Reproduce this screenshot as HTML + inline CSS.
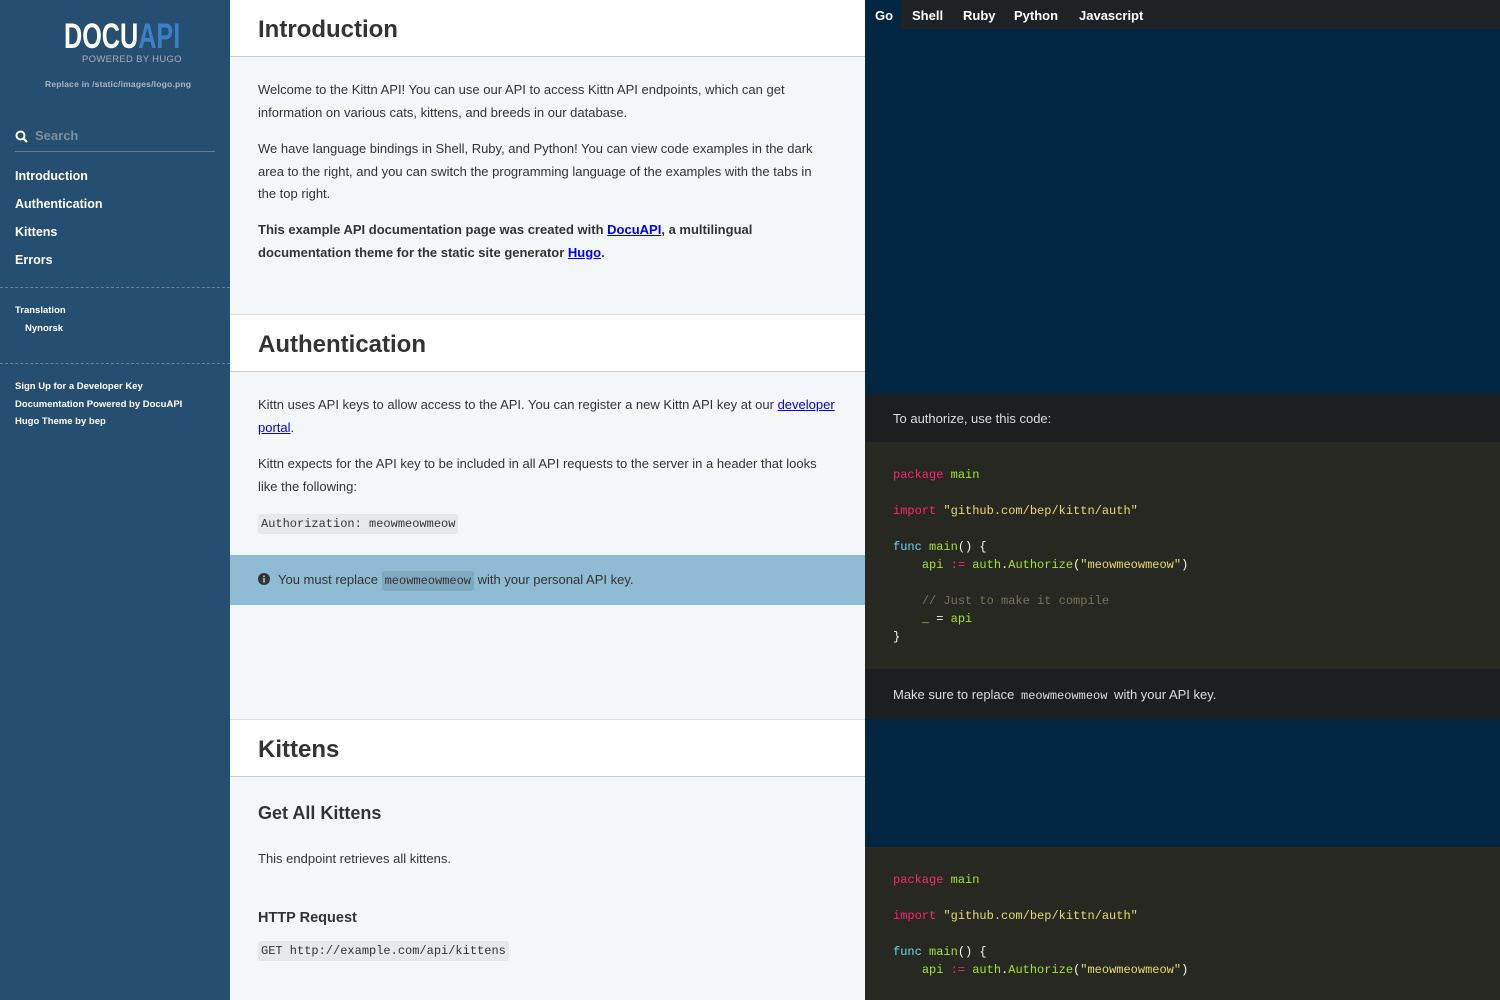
<!DOCTYPE html>
<html><head><meta charset="utf-8"><style>
*{margin:0;padding:0;box-sizing:border-box}
body{width:1500px;height:1000px;overflow:hidden;font-family:"Liberation Sans",sans-serif;font-size:13px;color:#333;background:#f3f7f9;position:relative}
.side{position:absolute;left:0;top:0;width:230px;height:1000px;background:#264e70;color:#fff}
.logo{position:absolute;left:64px;top:17px;font-family:"Liberation Sans Narrow","Liberation Sans",sans-serif;font-weight:bold;font-size:35px;letter-spacing:0;transform:scaleX(.72);transform-origin:left;white-space:nowrap}
.logo span{color:#3b7fc4}
.pw{position:absolute;left:82px;top:54px;font-size:9.5px;color:#aab;letter-spacing:.3px}
.rep{position:absolute;left:45px;top:79px;font-size:8.5px;font-weight:bold;color:#aab7c4;letter-spacing:.2px}
.srch{position:absolute;left:15px;top:128px;width:200px;height:24px;border-bottom:1px solid #6b7f92;color:#7f8c99;font-weight:bold;font-size:13px;padding-left:20px}
.srch svg{position:absolute;left:0;top:2px}
.nav{position:absolute;left:15px;font-weight:bold;font-size:12.5px}
.dash{position:absolute;left:0;width:230px;border-top:1px dashed #6b8099}
.sm{position:absolute;left:15px;font-weight:bold;font-size:9.5px}
.main{position:absolute;left:230px;top:0;width:635px;height:1000px}
.hd{position:absolute;left:0;width:635px;height:58px;background:#fff;border-bottom:1px solid #ccc;border-top:1px solid #ddd;font-weight:bold;font-size:24px;color:#333;padding:16px 28px 0}
.p{position:absolute;left:28px;width:575px;line-height:22.5px;font-size:13px}
a{color:#0000ee;text-decoration:underline}
code{font-family:"Liberation Mono",monospace;font-size:12px;background:#e5e9ec;padding:3px 3px;border-radius:3px}
.note{position:absolute;left:0;top:555px;width:635px;height:50px;background:#8fbbd4;padding:17px 28px;font-size:13px}
.note code{background:#80a9c0}
.right{position:absolute;left:865px;top:0;width:635px;height:1000px;background:#022541}
.tabs{position:absolute;top:0;left:0;width:635px;height:29px;background:#1f2225;color:#fff;font-weight:bold;font-size:13px}
.tabs span{position:absolute;top:8px}
.call{position:absolute;left:0;width:635px;background:#1c1e20;color:#ddd;font-size:13px;padding-left:28px}
.call code{background:none;color:#ddd}
.code{position:absolute;left:0;width:635px;background:#272822;color:#f8f8f2;font-family:"Liberation Mono",monospace;font-size:12px;line-height:18px;padding-left:28px;white-space:pre}
.k{color:#f92672}.g{color:#a6e22e}.s{color:#e6db74}.b{color:#66d9ef}.c{color:#75715e}
</style></head><body>
<div class="side">
<div class="logo">DOCU<span>API</span></div>
<div class="pw">POWERED BY HUGO</div>
<div class="rep">Replace in /static/images/logo.png</div>
<div class="srch"><svg width="13" height="13" viewBox="0 0 13 13"><circle cx="5.5" cy="5.5" r="4" stroke="#fff" stroke-width="2" fill="none"/><line x1="8.5" y1="8.5" x2="12" y2="12" stroke="#fff" stroke-width="2.2"/></svg>Search</div>
<div class="nav" style="top:169px">Introduction</div>
<div class="nav" style="top:197px">Authentication</div>
<div class="nav" style="top:225px">Kittens</div>
<div class="nav" style="top:253px">Errors</div>
<div class="dash" style="top:287px"></div>
<div class="sm" style="top:305px">Translation</div>
<div class="sm" style="top:323px;left:25px">Nynorsk</div>
<div class="dash" style="top:363px"></div>
<div class="sm" style="top:381px">Sign Up for a Developer Key</div>
<div class="sm" style="top:399px">Documentation Powered by DocuAPI</div>
<div class="sm" style="top:416px">Hugo Theme by bep</div>
</div>
<div class="main">
<div class="hd" style="top:-1px">Introduction</div>
<div class="p" style="top:79px">Welcome to the Kittn API! You can use our API to access Kittn API endpoints, which can get information on various cats, kittens, and breeds in our database.</div>
<div class="p" style="top:138px">We have language bindings in Shell, Ruby, and Python! You can view code examples in the dark area to the right, and you can switch the programming language of the examples with the tabs in the top right.</div>
<div class="p" style="top:219px;font-weight:bold">This example API documentation page was created with <a href="#">DocuAPI</a>, a multilingual documentation theme for the static site generator <a href="#">Hugo</a>.</div>
<div class="hd" style="top:314px">Authentication</div>
<div class="p" style="top:394px;width:590px">Kittn uses API keys to allow access to the API. You can register a new Kittn API key at our <a href="#">developer portal</a>.</div>
<div class="p" style="top:453px">Kittn expects for the API key to be included in all API requests to the server in a header that looks like the following:</div>
<div class="p" style="top:512px"><code>Authorization: meowmeowmeow</code></div>
<div class="note"><svg width="12" height="12" viewBox="0 0 12 12" style="vertical-align:-1px;margin-right:8px"><circle cx="6" cy="6" r="6" fill="#333"/><rect x="5.1" y="5" width="1.8" height="4.5" fill="#8fbbd4"/><circle cx="6" cy="3.2" r="1" fill="#8fbbd4"/></svg>You must replace <code>meowmeowmeow</code> with your personal API key.</div>
<div class="hd" style="top:719px">Kittens</div>
<div class="p" style="top:802px;font-weight:bold;font-size:18px">Get All Kittens</div>
<div class="p" style="top:848px">This endpoint retrieves all kittens.</div>
<div class="p" style="top:907px;font-weight:bold;font-size:14.5px">HTTP Request</div>
<div class="p" style="top:939px"><code>GET http://example.com/api/kittens</code></div>
</div>
<div class="right">
<div class="tabs"><span style="left:0;top:0;width:36px;height:29px;background:#022541;padding:8px 10px">Go</span><span style="left:47px">Shell</span><span style="left:98px">Ruby</span><span style="left:149px">Python</span><span style="left:214px">Javascript</span></div>
<div class="call" style="top:394px;height:48px;line-height:49px">To authorize, use this code:</div>
<div class="code" style="top:442px;height:227px;padding-top:24px"><span class="k">package</span> <span class="g">main</span>

<span class="k">import</span> <span class="s">"github.com/bep/kittn/auth"</span>

<span class="b">func</span> <span class="g">main</span>() {
    <span class="g">api</span> <span class="k">:=</span> <span class="g">auth</span>.<span class="g">Authorize</span>(<span class="s">"meowmeowmeow"</span>)

    <span class="c">// Just to make it compile</span>
    <span class="g">_</span> = <span class="g">api</span>
}</div>
<div class="call" style="top:669px;height:50px;line-height:51px">Make sure to replace <code>meowmeowmeow</code> with your API key.</div>
<div class="code" style="top:847px;height:153px;padding-top:24px"><span class="k">package</span> <span class="g">main</span>

<span class="k">import</span> <span class="s">"github.com/bep/kittn/auth"</span>

<span class="b">func</span> <span class="g">main</span>() {
    <span class="g">api</span> <span class="k">:=</span> <span class="g">auth</span>.<span class="g">Authorize</span>(<span class="s">"meowmeowmeow"</span>)</div>
</div>
</body></html>
